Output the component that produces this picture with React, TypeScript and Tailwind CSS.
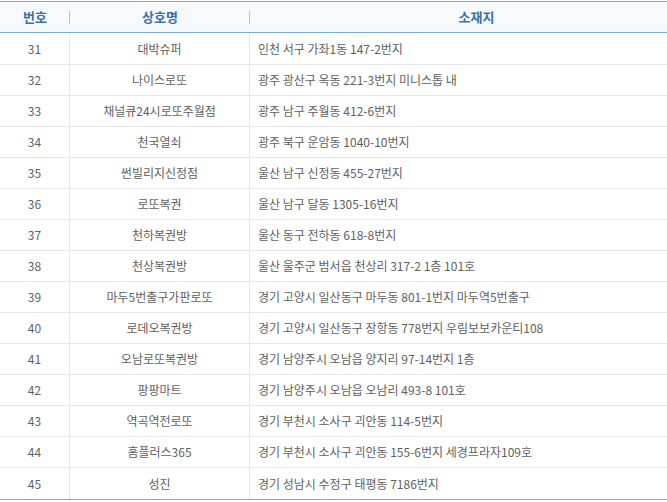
const rows: [string, string, string][] = [
  ['31', '대박슈퍼', '인천 서구 가좌1동 147-2번지'],
  ['32', '나이스로또', '광주 광산구 옥동 221-3번지 미니스톱 내'],
  ['33', '채널큐24시로또주월점', '광주 남구 주월동 412-6번지'],
  ['34', '천국열쇠', '광주 북구 운암동 1040-10번지'],
  ['35', '썬빌리지신정점', '울산 남구 신정동 455-27번지'],
  ['36', '로또복권', '울산 남구 달동 1305-16번지'],
  ['37', '천하복권방', '울산 동구 전하동 618-8번지'],
  ['38', '천상복권방', '울산 울주군 범서읍 천상리 317-2 1층 101호'],
  ['39', '마두5번출구가판로또', '경기 고양시 일산동구 마두동 801-1번지 마두역5번출구'],
  ['40', '로데오복권방', '경기 고양시 일산동구 장항동 778번지 우림보보카운티108'],
  ['41', '오남로또복권방', '경기 남양주시 오남읍 양지리 97-14번지 1층'],
  ['42', '팡팡마트', '경기 남양주시 오남읍 오남리 493-8 101호'],
  ['43', '역곡역전로또', '경기 부천시 소사구 괴안동 114-5번지'],
  ['44', '홈플러스365', '경기 부천시 소사구 괴안동 155-6번지 세경프라자109호'],
  ['45', '성진', '경기 성남시 수정구 태평동 7186번지'],
];

export default function App() {
  return (
    <div className="w-[667px] h-[502px] overflow-hidden bg-white pt-px font-['Noto_Sans_CJK_KR','Noto_Sans',sans-serif]">
      <div className="border-t border-b border-[#7eaad8]">
        {/* Header */}
        <div className="flex h-[31px] items-center border-b border-[#7eaad8] bg-[#f6fafd] text-[13px] font-bold text-[#3b70a8]">
          <div className="relative flex h-full w-[70px] items-center justify-center">
            번호
            <span className="absolute right-0 top-[9px] h-[13px] w-px bg-[#a8c6e2]" />
          </div>
          <div className="relative flex h-full w-[180px] items-center justify-center">
            상호명
            <span className="absolute right-0 top-[9px] h-[13px] w-px bg-[#a8c6e2]" />
          </div>
          <div className="flex h-full flex-1 items-center justify-center pl-9">소재지</div>
        </div>

        {/* Body */}
        <div className="pt-px text-[12px] text-[#5f5f5f]">
          {rows.map(([no, name, addr], i) => (
            <div
              key={no}
              className={`flex h-[31px] ${i < rows.length - 1 ? 'border-b border-[#e6e6e6]' : 'h-[30px]'}`}
            >
              <div className="flex w-[70px] items-center justify-center border-r border-[#e6e6e6]">{no}</div>
              <div className="flex w-[180px] items-center justify-center border-r border-[#e6e6e6]">{name}</div>
              <div className="flex flex-1 items-center whitespace-nowrap pl-2">{addr}</div>
            </div>
          ))}
        </div>
      </div>
    </div>
  );
}
